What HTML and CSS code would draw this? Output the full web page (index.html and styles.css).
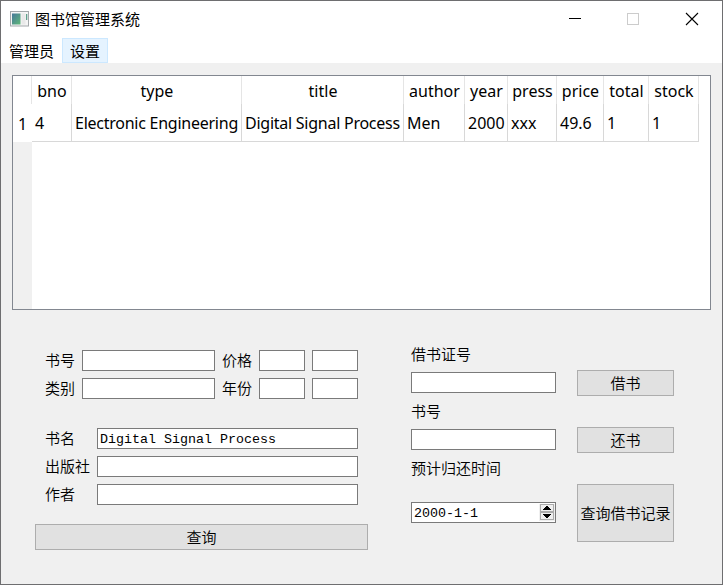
FILE: index.html
```html
<!DOCTYPE html>
<html lang="zh-CN">
<head>
<meta charset="utf-8">
<title>图书馆管理系统</title>
<link rel="stylesheet" href="styles.css">
</head>
<body>
<div class="window">
  <header class="titlebar">
    <svg class="app-icon" width="19" height="16" viewBox="0 0 19 16">
      <defs><linearGradient id="pane" x1="0" y1="0" x2="1" y2="1"><stop offset="0" stop-color="#46789a"/><stop offset="1" stop-color="#5fb878"/></linearGradient></defs>
      <rect x=".5" y=".5" width="18" height="14.500" fill="#f5f5f5" stroke="#a3a8ab"/>
      <rect x="2" y="2.500" width="8.500" height="11" fill="url(#pane)"/>
      <rect x="11.500" y="2.500" width="4" height="11" fill="#e9e9e9"/>
      <rect x="16" y="3" width="1.300" height="6" fill="#5fa08c"/>
    </svg>
    <h1 class="title">图书馆管理系统</h1>
    <svg class="controls" width="130" height="14" viewBox="0 0 130 14" fill="none" shape-rendering="crispEdges">
      <path d="M0 6.500h12" stroke="#000"/>
      <rect x="58.500" y="1.500" width="11" height="11" stroke="#ccc"/>
      <path d="M117 1l12 12M129 1l-12 12" stroke="#000" stroke-width="1.100" shape-rendering="auto"/>
    </svg>
  </header>
  <nav class="menubar">
    <span class="menu">管理员</span>
    <span class="menu active">设置</span>
  </nav>
  <main class="content">
    <div class="table-view">
      <table class="books">
        <colgroup><col class="c-index"><col class="c-bno"><col class="c-type"><col class="c-title"><col class="c-author"><col class="c-year"><col class="c-press"><col class="c-price"><col class="c-total"><col class="c-stock"></colgroup>
        <thead><tr><th></th><th>bno</th><th>type</th><th>title</th><th>author</th><th>year</th><th>press</th><th>price</th><th>total</th><th>stock</th></tr></thead>
        <tbody><tr><td class="index">1</td><td>4</td><td class="long">Electronic Engineering</td><td class="long">Digital Signal Process</td><td>Men</td><td>2000</td><td>xxx</td><td>49.6</td><td>1</td><td>1</td></tr></tbody>
      </table>
    </div>
    <div class="panels">
      <section class="search">
        <div class="filters">
          <span class="label">书号</span><div class="field"></div><span class="label">价格</span><div class="field"></div><div class="field"></div>
          <span class="label">类别</span><div class="field"></div><span class="label">年份</span><div class="field"></div><div class="field"></div>
        </div>
        <div class="details">
          <span class="label">书名</span><div class="field">Digital Signal Process</div>
          <span class="label">出版社</span><div class="field"></div>
          <span class="label">作者</span><div class="field"></div>
        </div>
        <div class="button query">查询</div>
      </section>
      <section class="loan">
        <div class="loan-fields">
          <span class="label">借书证号</span>
          <div class="field"></div>
          <span class="label">书号</span>
          <div class="field"></div>
          <span class="label">预计归还时间</span>
          <div class="field date"><span>2000-1-1</span>
            <svg class="spin" width="16" height="17" viewBox="0 0 16 17" shape-rendering="crispEdges">
              <path d="M0 0h16v17H0z" fill="#f0f0f0"/>
              <path d="M1.500 .5h13v7h-13zM1.500 8.500h13v7h-13z" fill="#f0f0f0" stroke="#acacac"/>
              <path d="M7 2h2v1h1v1h1v1h1v1H4V5h1V4h1V3h1zM4 10h8v1h-1v1h-1v1H9v1H7v-1H6v-1H5v-1H4z" fill="#000"/>
            </svg>
          </div>
        </div>
        <div class="loan-actions">
          <div class="button">借书</div>
          <div class="button">还书</div>
          <div class="button tall">查询借书记录</div>
        </div>
      </section>
    </div>
  </main>
</div>
</body>
</html>
```
FILE: styles.css
```css
* { box-sizing: border-box; }
body {
  margin: 0;
  color: #000;
  font: 15px/20px "Noto Sans CJK SC", sans-serif;
}
.window {
  width: 723px;
  height: 585px;
  border: 1px solid #6e6e70;
  background: #f0f0f0;
  display: flex;
  flex-direction: column;
  overflow: hidden;
}
.titlebar {
  height: 37px;
  flex: none;
  background: #fff;
  display: flex;
  align-items: center;
  padding: 0 23px 2px 9px;
}
.app-icon { margin-right: 6px; }
.controls { margin-top: 1px; }
.title { margin: 0; font-size: 15px; font-weight: 400; flex: 1; }
.menubar {
  height: 25px;
  flex: none;
  background: #fff;
  display: flex;
}
.menu { height: 25px; padding: 3px 8px; line-height: 20px; }
.menu.active {
  padding: 2px 7px;
  border: 1px solid #cce8ff;
  background: #e5f3ff;
}
.content { padding: 12px 11px 0; }
.table-view {
  height: 235px;
  border: 1px solid #828790;
  background: linear-gradient(90deg, #f0f0f0 19px, #fff 19px);
}
.books {
  width: 686px;
  height: 66px;
  table-layout: fixed;
  border-collapse: separate;
  border-spacing: 0;
  font: 16px/22px "Noto Sans", sans-serif;
  white-space: nowrap;
}
.c-index { width: 19px; }
.c-bno { width: 40px; }
.c-type { width: 170px; }
.c-title { width: 162px; }
.c-author { width: 61px; }
.c-year { width: 43px; }
.c-press { width: 49px; }
.c-price { width: 47px; }
.c-total { width: 45px; }
.c-stock { width: 50px; }
.books th {
  height: 28px;
  padding: 2px 0 0 1px;
  font-weight: 400;
  border-right: 1px solid #e5e5e5;
  background: #fff;
}
.books td {
  height: 38px;
  padding: 1px 0 0 3px;
  border-right: 1px solid #d8d8d8;
  border-bottom: 1px solid #d8d8d8;
  background: #fff;
}
.books .long { letter-spacing: -.25px; }
.books .index { border-color: #fff; padding: 3px 0 0 5px; }
.panels { display: flex; }
.label { line-height: 19px; height: 21px; white-space: nowrap; font-weight: 350; }
.field {
  height: 21px;
  border: 1px solid #7a7a7a;
  background: #fff;
  padding-left: 2px;
  font: 13.333px/21px "Liberation Mono", monospace;
  white-space: pre;
}
.search { width: 357px; padding: 40px 0 0 23px; }
.filters {
  margin-left: 10px;
  display: grid;
  grid-template-columns: 30px 133px 30px 46px 46px;
  column-gap: 7px;
  row-gap: 7px;
}
.details {
  margin: 29px 0 0 10px;
  display: grid;
  grid-template-columns: 45px 261px;
  column-gap: 7px;
  row-gap: 7px;
}
.button {
  height: 26px;
  border: 1px solid #adadad;
  background: #e1e1e1;
  display: flex;
  align-items: center;
  justify-content: center;
  white-space: nowrap;
  font-weight: 350;
}
.query { width: 333px; margin-top: 19px; }
.loan { display: flex; gap: 21px; padding: 34px 0 0 42px; }
.loan-fields { width: 145px; display: flex; flex-direction: column; }
.loan-fields .field { margin: 7px 0 8px; }
.loan-fields .date { margin-top: 23px; display: flex; justify-content: space-between; padding-right: 0; }
.spin { margin: 1px 0 0; }
.loan-actions { width: 97px; padding-top: 26px; display: flex; flex-direction: column; gap: 31px; }
.button.tall { height: 58px; }
```
